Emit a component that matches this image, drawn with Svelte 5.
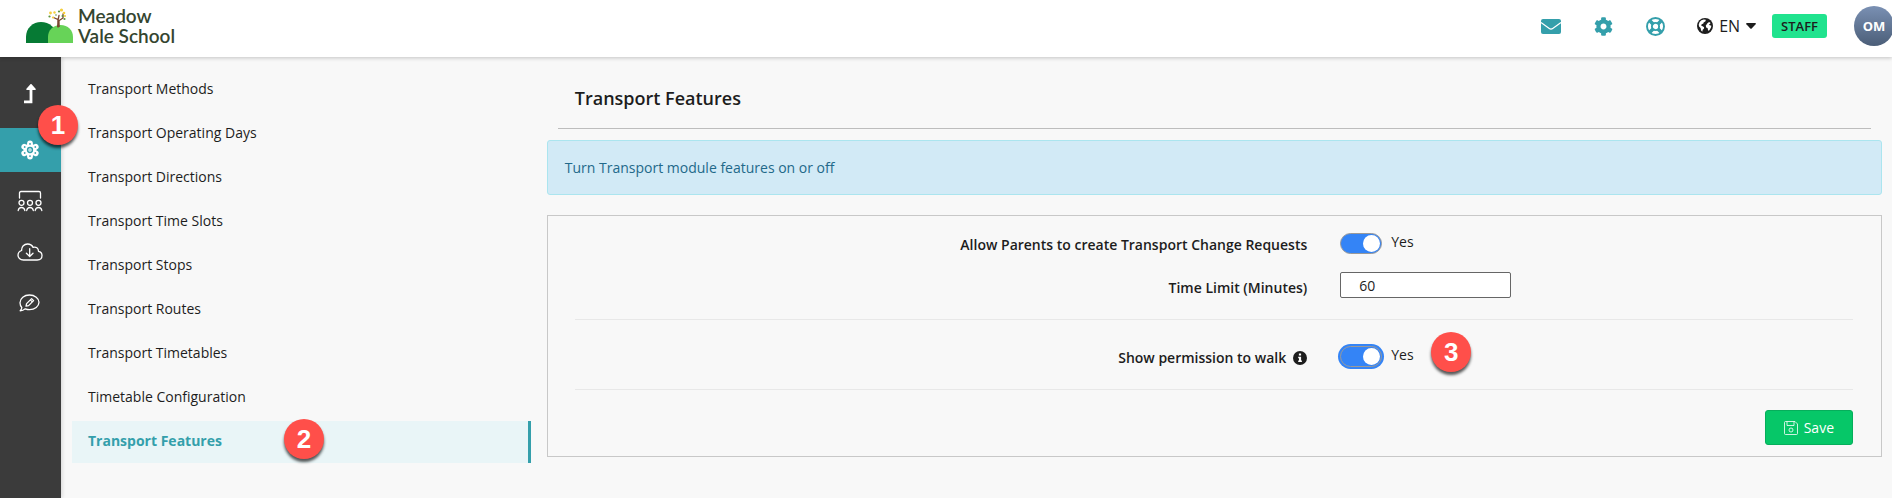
<script>
  const menu = [
    'Transport Methods',
    'Transport Operating Days',
    'Transport Directions',
    'Transport Time Slots',
    'Transport Stops',
    'Transport Routes',
    'Transport Timetables',
    'Timetable Configuration',
    'Transport Features'
  ];
  const current = 'Transport Features';

  let allowRequests = $state(true);
  let showWalk = $state(true);
  let timeLimit = $state('60');

  const petals = [0, 60, 120, 180, 240, 300];
</script>

<div class="app">
  <header>
    <a class="logo" href="#home" aria-label="Meadow Vale School">
      <svg width="49" height="36" viewBox="0 0 49 36" aria-hidden="true">
        <path d="M1 35V29C1 20 8 14 16 14s16 6 16 15v6z" fill="#067a34" />
        <path d="M23 35v-6c0-7 5-12 12.500-12S48 22 48 29v6z" fill="#67d358" />
        <path d="M33 19c.6-3 .5-5-.2-7.500L28.500 9.500M33 12.500l1-5M33.500 13l4.500-3V6" fill="none" stroke="#7a4630" stroke-width="1.300" stroke-linecap="round" />
        <path d="M32 19l.6-6h2l.2 6z" fill="#7a4630" />
        <g fill="#f4cf3e">
          <circle cx="25.500" cy="5" r="1.400" /><circle cx="29.500" cy="4.500" r="1.200" /><circle cx="36.500" cy="2" r="1.600" />
          <circle cx="39" cy="5" r="1.300" /><circle cx="28" cy="9.500" r="1.100" /><circle cx="40" cy="8" r="1.100" />
        </g>
        <g fill="#5c9440">
          <circle cx="24.500" cy="8.500" r="1.100" /><circle cx="34" cy="3.500" r="1.100" /><circle cx="37.500" cy="8" r="1" />
          <circle cx="39.500" cy="11" r="1.100" /><circle cx="31" cy="7" r=".8" />
        </g>
      </svg>
      <span>Meadow<br />Vale School</span>
    </a>

    <div class="tools">
      <button class="tool" aria-label="Messages">
        <svg width="20" height="15" viewBox="0 0 20 15">
          <rect width="20" height="15" rx="2" fill="currentColor" />
          <path d="M0 3.500l8.300 6q1.700 1.200 3.400 0L20 3.500" fill="none" stroke="#fff" stroke-width="1.200" />
        </svg>
      </button>
      <button class="tool" aria-label="Settings">
        <svg width="19" height="19" viewBox="0 0 512 512" fill="currentColor">
          <path d="M487.400 315.700l-42.600-24.600c4.300-23.200 4.300-47 0-70.200l42.600-24.600c4.900-2.800 7.100-8.600 5.500-14-11.100-35.600-30-67.800-54.700-94.600-3.800-4.100-10-5.100-14.800-2.300L380.800 110c-17.900-15.400-38.500-27.300-60.800-35.100V25.800c0-5.600-3.900-10.500-9.400-11.700-36.700-8.200-74.300-7.800-109.200 0-5.500 1.200-9.400 6.100-9.400 11.700V75c-22.200 7.900-42.800 19.800-60.800 35.100L88.700 85.500c-4.900-2.800-11-1.900-14.800 2.300-24.700 26.700-43.600 58.900-54.700 94.600-1.700 5.400.6 11.200 5.500 14L67.300 221c-4.300 23.200-4.300 47 0 70.200l-42.600 24.600c-4.900 2.800-7.100 8.600-5.500 14 11.100 35.600 30 67.800 54.700 94.600 3.800 4.100 10 5.100 14.800 2.300l42.600-24.600c17.900 15.400 38.500 27.300 60.800 35.100v49.200c0 5.600 3.900 10.500 9.400 11.700 36.700 8.200 74.300 7.800 109.200 0 5.500-1.200 9.400-6.100 9.400-11.700v-49.200c22.200-7.900 42.800-19.800 60.800-35.100l42.600 24.600c4.900 2.800 11 1.900 14.800-2.300 24.700-26.700 43.600-58.900 54.700-94.600 1.500-5.500-.7-11.300-5.600-14.100zM256 336c-44.100 0-80-35.900-80-80s35.900-80 80-80 80 35.900 80 80-35.900 80-80 80z" />
        </svg>
      </button>
      <button class="tool" aria-label="Help">
        <svg width="19" height="19" viewBox="0 0 19 19" fill="none" stroke="currentColor">
          <circle cx="9.500" cy="9.500" r="8.500" stroke-width="1.900" />
          <circle cx="9.500" cy="9.500" r="3.600" stroke-width="1.900" />
          <path d="M3.800 3.800l3.200 3.200M15.200 3.800L12 7M3.800 15.200L7 12M15.200 15.200L12 12" stroke-width="3.600" />
        </svg>
      </button>
      <button class="lang">
        <svg width="16" height="16" viewBox="0 0 16 16" aria-hidden="true">
          <circle cx="8" cy="8" r="8" fill="#1d1d1d" />
          <path d="M6.800 1.500l2 .2-.3 1.500-1.900 1.200-.2 1.200-1.700.6-.6 1.400 1.500.6 1.500 1-.2 1.500-1.200 1.100-.4 1.900-1.200-1.200-.5-2.400-1.500-1.700-.4-1.700.9-2.600 1.800-1.900zM10.400 5.200l1.700-1.200 1.500.9-.7 1.200-1 .3.9.8 1.600.6-.5 1.900-1.500 2.600-1.300.4-.5-2.600-1.500-.7-.3-1.900 1-1.200z" fill="#fff" />
        </svg>
        <span>EN</span>
        <svg width="10" height="6" viewBox="0 0 10 6" aria-hidden="true"><path d="M.8 0h8.400q1.200.2.400 1.200L5.700 5.500q-.7.700-1.400 0L.4 1.200Q-.3.200.8 0z" fill="#1d1d1d" /></svg>
      </button>
      <span class="role">STAFF</span>
      <button class="avatar">OM</button>
    </div>
  </header>

  <div class="body">
    <nav class="rail" aria-label="Sections">
      <a href="#up" aria-label="Overview">
        <svg width="14" height="20" viewBox="0 0 14 20" fill="none" stroke="#fff">
          <path d="M8 4v13.800H1" stroke-width="2.800" />
          <path d="M8 .8l4 4.400H4z" fill="#fff" stroke-width="1.600" stroke-linejoin="round" />
        </svg>
      </a>
      <a href="#setup" class="active" aria-label="Setup">
        <svg width="20" height="20" viewBox="0 0 20 20">
          <circle cx="10" cy="10" r="6.500" fill="#fff" />
          {#each petals as angle (angle)}
            <g transform={`rotate(${angle} 10 10)`}>
              <circle cx="10" cy="3.400" r="2.900" fill="#fff" />
              <circle cx="10" cy="3.900" r=".9" fill="#349fab" />
            </g>
          {/each}
          <circle cx="10" cy="10" r="2.400" fill="#fff" stroke="#349fab" stroke-width="1.500" />
          <circle cx="10" cy="10" r=".7" fill="#349fab" />
        </svg>
        <b class="marker first">1</b>
      </a>
      <a href="#classes" aria-label="Classes">
        <svg width="26" height="22" viewBox="0 0 26 22" fill="none" stroke="#fff" stroke-width="1.300" stroke-linecap="round">
          <path d="M2.500 8V3q0-1.500 1.500-1.500h18q1.500 0 1.500 1.500v5" />
          {#each [4.5, 13, 21.5] as x (x)}
            <circle cx={x} cy="12.800" r="2.500" />
            <path d={`M${x - 3.3} 20.500q.5-3 3.300-3t3.300 3`} />
          {/each}
        </svg>
      </a>
      <a href="#download" aria-label="Downloads">
        <svg width="26" height="18" viewBox="0 0 26 18" fill="none" stroke="#fff" stroke-width="1.300" stroke-linecap="round" stroke-linejoin="round">
          <path d="M6.500 17C3 17 1 14.800 1 12.200c0-2.300 1.400-4 3.600-4.700C4.400 3.600 7.200 1 10.500 1c2.600 0 4.600 1.300 5.600 3.400 2.900-1 5.400.9 5.400 3.900 2.200.4 3.500 2 3.500 4.200 0 2.700-2 4.500-4.800 4.500z" />
          <path d="M12.700 5.700v7.500M9.400 10.200l3.300 3.300 3.300-3.300" />
        </svg>
      </a>
      <a href="#notes" aria-label="Notes">
        <svg width="21" height="18" viewBox="0 0 21 18" fill="none" stroke="#fff" stroke-width="1.300" stroke-linejoin="round">
          <path d="M1.200 16.800c1-1 1.500-2 1.600-3.300C1.500 12 1 10.400 1 8.700 1 4.300 5.200 1 10.500 1S20 4.300 20 8.300s-4.200 7.300-9.500 7.300c-1.500 0-3-.3-4.200-.8-1.500 1.300-3.200 2-5.100 2z" />
          <path d="M7 12.200l.6-2.600 5-5 2 2-5 5zM11.300 5.900l2 2" />
        </svg>
      </a>
    </nav>

    <nav class="menu" aria-label="Transport">
      <ul>
        {#each menu as item (item)}
          <li>
            <a href="#{item}" class:current={item === current}>
              {item}
              {#if item === current}<b class="marker second">2</b>{/if}
            </a>
          </li>
        {/each}
      </ul>
    </nav>

    <main>
      <h1>Transport Features</h1>
      <p class="notice">Turn Transport module features on or off</p>

      <form onsubmit={(e) => e.preventDefault()}>
        <div class="row">
          <label for="requests">Allow Parents to create Transport Change Requests</label>
          <div class="control">
            <input id="requests" type="checkbox" role="switch" bind:checked={allowRequests} />
            <span>{allowRequests ? 'Yes' : 'No'}</span>
          </div>
        </div>
        <div class="row limit">
          <label for="limit">Time Limit (Minutes)</label>
          <div class="control">
            <input id="limit" type="text" bind:value={timeLimit} />
          </div>
        </div>
        <hr />
        <div class="row walk">
          <label for="walk">
            Show permission to walk
            <svg width="14" height="14" viewBox="0 0 14 14" aria-hidden="true">
              <circle cx="7" cy="7" r="7" fill="#1d1d1d" />
              <path d="M5.900 2.600h2.200v2H5.900zM5.200 5.700h2.900v3.800h.8v1.500H5.200V9.500H6V7.200h-.8z" fill="#fff" />
            </svg>
          </label>
          <div class="control">
            <input id="walk" class="ring" type="checkbox" role="switch" bind:checked={showWalk} />
            <span>{showWalk ? 'Yes' : 'No'}</span>
            <b class="marker third">3</b>
          </div>
        </div>
        <hr />
        <div class="actions">
          <button class="save">
            <svg width="14" height="14" viewBox="0 0 14 14" fill="none" stroke="#fff" stroke-width=".8" aria-hidden="true">
              <path d="M.5 1.500q0-1 1-1H11L13.500 3v9.500q0 1-1 1h-11q-1 0-1-1zM3 .5v4h7v-4" />
              <circle cx="7" cy="9" r="2" />
            </svg>
            Save
          </button>
        </div>
      </form>
    </main>
  </div>
</div>

<style>
  :global(body) {
    margin: 0;
    background: #f8f8f8;
  }
  * {
    box-sizing: border-box;
  }
  .app {
    min-height: 100vh;
    display: flex;
    flex-direction: column;
    overflow-x: hidden;
    font: 14px/20px 'Open Sans', sans-serif;
    color: #1d1d1d;
  }
  a {
    color: inherit;
    text-decoration: none;
  }
  button {
    font: inherit;
    color: inherit;
    border: 0;
    padding: 0;
    background: none;
    cursor: pointer;
  }
  svg {
    display: block;
    flex: none;
  }

  header {
    position: relative;
    height: 57px;
    flex: none;
    display: flex;
    justify-content: space-between;
    background: #fff;
    box-shadow: 0 1px 4px rgba(0, 0, 0, 0.22);
  }
  .logo {
    display: flex;
    gap: 4px;
    align-self: flex-start;
    padding: 6px 0 0 25px;
    font: 600 19px/20px Lato, sans-serif;
    color: #34452f;
  }
  .logo svg {
    margin-top: 2px;
  }
  .tools {
    display: flex;
    align-items: center;
    height: 52px;
  }
  .tool {
    width: 20px;
    display: flex;
    justify-content: center;
    margin-right: 32px;
    color: #349fab;
  }
  .lang {
    display: flex;
    align-items: center;
    gap: 6px;
    font-size: 16px;
  }
  .role {
    margin: 0 27px 0 16px;
    padding: 2px 9px;
    border-radius: 3px;
    background: #20e38e;
    font-size: 13px;
    font-weight: 600;
  }
  .avatar {
    width: 40px;
    height: 40px;
    margin-right: -2px;
    border-radius: 50%;
    background: linear-gradient(#7a90b3, #4b5e78);
    color: #fff;
    font-weight: 700;
    font-size: 13px;
  }

  .body {
    flex: 1;
    display: grid;
    grid-template-columns: 61px 13fr 36fr;
  }
  .rail {
    display: flex;
    flex-direction: column;
    gap: 7px;
    padding-top: 15px;
    background: #3b3b3b;
    box-shadow: 1px 0 4px rgba(0, 0, 0, 0.15);
  }
  .rail a {
    position: relative;
    height: 44px;
    padding-right: 2px;
    display: flex;
    align-items: center;
    justify-content: center;
  }
  .rail a:first-child {
    margin-bottom: 5px;
  }
  .rail .active {
    background: #349fab;
  }

  .menu ul {
    list-style: none;
    margin: 0;
    padding: 12px 16px 0 11px;
    display: flex;
    flex-direction: column;
    gap: 2px;
  }
  .menu a {
    position: relative;
    display: block;
    padding: 10px 16px 12px;
  }
  .menu .current {
    background: #e9f5f7;
    border-right: 3px solid #349fab;
    color: #349fab;
    font-weight: 700;
  }

  .marker {
    position: absolute;
    z-index: 1;
    width: 40px;
    height: 40px;
    border-radius: 50%;
    background: #ff4f4a;
    box-shadow: 0 3px 3px rgba(0, 0, 0, 0.65);
    color: #fff;
    font: 700 26px/40px 'Liberation Sans', sans-serif;
    text-align: center;
  }
  .first {
    left: 38px;
    top: -23px;
  }
  .second {
    left: 212px;
    top: -2px;
  }
  .third {
    left: 91px;
    top: -14px;
  }

  main {
    padding-right: 10px;
  }
  h1 {
    margin: 0 11px 11px;
    padding: 29px 17px 18px;
    border-bottom: 1px solid #bdbdbd;
    font-size: 18px;
    line-height: 24px;
    font-weight: 600;
  }
  .notice {
    margin: 0 0 20px;
    padding: 17px 17px 16px;
    border: 1px solid #abe5ef;
    border-radius: 3px;
    background: #d2eaf6;
    color: #22698a;
  }
  form {
    padding: 17px 28px 11px 27px;
    border: 1px solid #c8c8c8;
  }
  .row {
    display: grid;
    grid-template-columns: 10fr 7fr;
    column-gap: 33px;
    align-items: start;
  }
  .row label {
    display: flex;
    justify-content: flex-end;
    align-items: center;
    gap: 7px;
    padding-top: 2px;
    font-weight: 600;
  }
  .limit {
    margin-top: 17px;
  }
  .limit label {
    padding-top: 6px;
  }
  .control {
    position: relative;
    display: flex;
    align-items: flex-start;
    gap: 9px;
  }
  .control span {
    margin-top: -1px;
  }
  input[type='checkbox'] {
    appearance: none;
    width: 42px;
    height: 21px;
    margin: 0;
    padding: 1px;
    display: flex;
    border: 1px solid #999;
    border-radius: 11px;
    background: #bbb;
  }
  input[type='checkbox']::before {
    content: '';
    width: 17px;
    height: 17px;
    border-radius: 50%;
    background: #fff;
  }
  input[type='checkbox']:checked {
    justify-content: flex-end;
    background: #3484f6;
  }
  .ring {
    box-shadow: 0 0 0 2px #3484f6;
  }
  input[type='text'] {
    width: 171px;
    height: 26px;
    padding: 0 18px;
    border: 1px solid #666;
    border-radius: 2px;
    background: #fff;
    color: inherit;
    font: inherit;
  }
  hr {
    margin: 21px 0 0;
    border: 0;
    border-top: 1px solid #e8e8e8;
  }
  .walk {
    padding-top: 26px;
  }
  .actions {
    display: flex;
    justify-content: flex-end;
    padding-top: 20px;
  }
  .save {
    display: flex;
    align-items: center;
    gap: 6px;
    height: 35px;
    padding: 0 18px;
    border: 1px solid #06ae5b;
    border-radius: 3px;
    background: #06c768;
    color: #fff;
    font-weight: 500;
  }
</style>
